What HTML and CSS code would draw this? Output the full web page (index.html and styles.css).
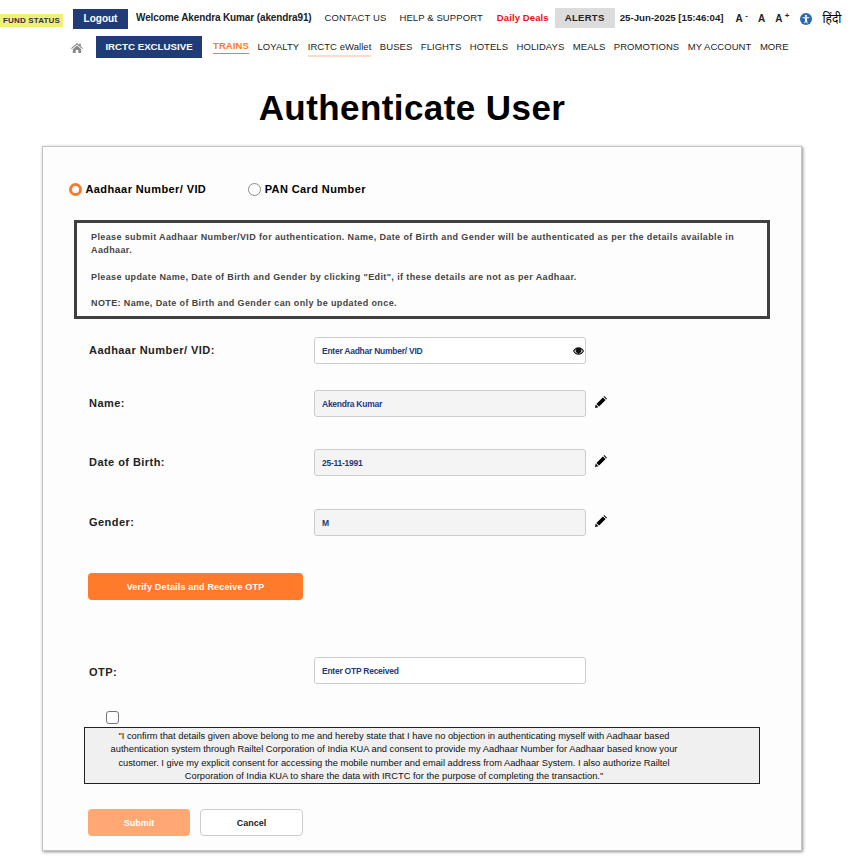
FILE: index.html
```html
<!DOCTYPE html>
<html lang="en">
<head>
  <meta charset="UTF-8" />
  <title>Authenticate User</title>
  <link rel="stylesheet" href="styles.css">
</head>
<body>
  <!-- Top bar -->
  <header class="top-bar">
    <span class="fund-status">FUND STATUS</span>
    <a class="logout-btn">Logout</a>
    <span class="welcome">Welcome Akendra Kumar (akendra91)</span>
    <a class="top-link contact">CONTACT US</a>
    <a class="top-link help">HELP &amp; SUPPORT</a>
    <a class="daily-deals">Daily Deals</a>
    <a class="alerts">ALERTS</a>
    <span class="clock">25-Jun-2025 [15:46:04]</span>
    <span class="font-size">A <sup>-</sup></span>
    <span class="font-size">A</span>
    <span class="font-size">A <sup>+</sup></span>
    <svg class="access-icon" viewBox="0 0 12 12" width="12" height="12">
      <circle cx="6" cy="6" r="6" fill="#2a69ac" />
      <circle cx="6" cy="2.9" r="1.1" fill="#fff" />
      <path d="M2.6 4.2h6.8v.9L7 5.6v2.2l.8 2.4h-1L6 8.2l-.8 2h-1L5 7.8V5.6l-2.4-.5z" fill="#fff" />
    </svg>
    <span class="hindi" lang="hi">हिंदी</span>
  </header>

  <!-- Main nav -->
  <nav class="main-nav">
    <svg class="home-icon" viewBox="0 0 12 10" width="12" height="10">
      <path d="M6 0 0 5.2l.7.8L6 1.5 11.3 6l.7-.8L9.8 3.3V.6H8.300v1.400z M1.800 6.200V10h3V7h2.400v3h3V6.200L6 2.600z" fill="#8a8a8a" />
    </svg>
    <a class="exclusive-btn">IRCTC EXCLUSIVE</a>
    <a class="nav-link trains">TRAINS</a>
    <a class="nav-link">LOYALTY</a>
    <a class="nav-link wallet">IRCTC eWallet</a>
    <a class="nav-link">BUSES</a>
    <a class="nav-link">FLIGHTS</a>
    <a class="nav-link">HOTELS</a>
    <a class="nav-link">HOLIDAYS</a>
    <a class="nav-link">MEALS</a>
    <a class="nav-link">PROMOTIONS</a>
    <a class="nav-link">MY ACCOUNT</a>
    <a class="nav-link">MORE</a>
  </nav>

  <h1 class="page-title">Authenticate User</h1>

  <main class="auth-card">
    <!-- ID type -->
    <div class="id-type">
      <label class="radio-label"><span class="radio checked"></span>Aadhaar Number/ VID</label>
      <label class="radio-label"><span class="radio"></span>PAN Card Number</label>
    </div>

    <div class="notice">
      <p>Please submit Aadhaar Number/VID for authentication. Name, Date of Birth and Gender will be authenticated as per the details available in Aadhaar.</p>
      <p>Please update Name, Date of Birth and Gender by clicking "Edit", if these details are not as per Aadhaar.</p>
      <p>NOTE: Name, Date of Birth and Gender can only be updated once.</p>
    </div>

    <!-- Fields -->
    <div class="field-row aadhaar-row">
      <label class="field-label">Aadhaar Number/ VID:</label>
      <div class="input-wrap">
        <input class="field-input" type="text" placeholder="Enter Aadhar Number/ VID" />
        <svg class="eye-icon" viewBox="0 0 12 8" width="11" height="8">
          <path d="M6 0C3.400 0 1.200 1.600 0 4c1.200 2.400 3.400 4 6 4s4.800-1.600 6-4C10.800 1.600 8.600 0 6 0z" fill="#111" />
          <path d="M1.300 4C2.300 2.600 3.300 1.700 4.300 1.300a3 3 0 1 0 3.400 0C8.700 1.700 9.700 2.600 10.700 4 9.500 5.800 7.800 6.900 6 6.900S2.500 5.800 1.300 4z" fill="#fff" />
          <circle cx="6" cy="3.800" r="2.300" fill="#111" />
        </svg>
      </div>
    </div>

    <div class="field-row name-row">
      <label class="field-label">Name:</label>
      <input class="field-input locked" type="text" value="Akendra Kumar" readonly />
      <svg class="edit-icon" viewBox="0 0 12 12" width="12" height="12">
        <path d="M0 12l.7-3.400 2.700 2.700z M1.400 7.900 7.900 1.400l2.700 2.700-6.500 6.500z M8.600.7 9.300 0 12 2.700l-.7.700z" fill="#000" />
      </svg>
    </div>

    <div class="field-row dob-row">
      <label class="field-label">Date of Birth:</label>
      <input class="field-input locked" type="text" value="25-11-1991" readonly />
      <svg class="edit-icon" viewBox="0 0 12 12" width="12" height="12">
        <path d="M0 12l.7-3.400 2.700 2.700z M1.400 7.900 7.900 1.400l2.700 2.700-6.500 6.500z M8.600.7 9.300 0 12 2.700l-.7.700z" fill="#000" />
      </svg>
    </div>

    <div class="field-row gender-row">
      <label class="field-label">Gender:</label>
      <input class="field-input locked" type="text" value="M" readonly />
      <svg class="edit-icon" viewBox="0 0 12 12" width="12" height="12">
        <path d="M0 12l.7-3.400 2.700 2.700z M1.400 7.900 7.900 1.400l2.700 2.700-6.500 6.500z M8.600.7 9.300 0 12 2.700l-.7.700z" fill="#000" />
      </svg>
    </div>

    <button type="button" class="btn verify-btn">Verify Details and Receive OTP</button>

    <div class="field-row otp-row">
      <label class="field-label">OTP:</label>
      <input class="field-input" type="text" placeholder="Enter OTP Received" />
    </div>

    <!-- Consent -->
    <span class="consent-check"></span>
    <p class="consent-box">"I confirm that details given above belong to me and hereby state that I have no objection in authenticating myself with Aadhaar based authentication system through Railtel Corporation of India KUA and consent to provide my Aadhaar Number for Aadhaar based know your customer. I give my explicit consent for accessing the mobile number and email address from Aadhaar System. I also authorize Railtel Corporation of India KUA to share the data with IRCTC for the purpose of completing the transaction."</p>

    <div class="actions">
      <button type="button" class="btn submit-btn">Submit</button>
      <button type="button" class="btn cancel-btn">Cancel</button>
    </div>
  </main>
</body>
</html>
```

FILE: styles.css
```css
* {
  box-sizing: border-box;
  margin: 0;
  padding: 0;
}

body {
  font-family: 'Liberation Sans', Arial, sans-serif;
  background: #fff;
  color: #000;
  height: 864px;
  overflow: hidden;
}

/* Top bar */
.top-bar {
  display: flex;
  align-items: center;
  height: 20px;
  margin-top: 8px;
  font-size: 9.5px;
  white-space: nowrap;
}

.fund-status {
  width: 63px;
  height: 13px;
  margin-top: 4px;
  line-height: 13px;
  background: #eef07a;
  font-size: 8px;
  font-weight: 700;
  letter-spacing: 0.15px;
  text-align: center;
  color: #333;
}

.logout-btn {
  width: 55px;
  height: 20px;
  margin: 2px 0 0 10px;
  line-height: 20px;
  background: #1f3c78;
  color: #fff;
  font-size: 10px;
  font-weight: 700;
  text-align: center;
}

.welcome {
  margin: 0 0 1px 8px;
  font-size: 10px;
  font-weight: 700;
  letter-spacing: -0.12px;
  color: #222;
}

.top-link {
  margin-bottom: 1px;
  color: #222;
  letter-spacing: 0.1px;
}

.contact {
  margin-left: 13px;
}

.help {
  margin-left: 13px;
}

.daily-deals {
  margin: 0 0 1px 14px;
  color: #f01010;
  font-weight: 700;
  letter-spacing: 0.1px;
}

.alerts {
  width: 60px;
  height: 20px;
  margin-left: 6px;
  line-height: 20px;
  background: #dcdcdc;
  font-weight: 700;
  letter-spacing: 0.3px;
  text-align: center;
  color: #222;
}

.clock {
  margin: 0 0 1px 5px;
  font-size: 9.7px;
  font-weight: 700;
  color: #222;
}

.font-size {
  margin-left: 10px;
  font-size: 10px;
  font-weight: 700;
  color: #222;
}

.clock + .font-size {
  margin-left: 12px;
}

.font-size sup {
  font-size: 8px;
  line-height: 0;
}

.access-icon {
  margin-left: 11px;
  margin-top: 2px;
}

.hindi {
  margin-left: 10px;
  font-family: 'Noto Sans', 'Liberation Sans', sans-serif;
  font-size: 12px;
}

/* Main nav */
.main-nav {
  display: flex;
  align-items: center;
  height: 22px;
  margin-top: 8px;
  padding-left: 71px;
  white-space: nowrap;
}

.home-icon {
  margin-top: 2px;
}

.exclusive-btn {
  width: 106px;
  height: 22px;
  margin-left: 13px;
  line-height: 22px;
  background: #1f3c78;
  color: #fff;
  font-size: 9.7px;
  font-weight: 700;
  text-align: center;
}

.nav-link {
  margin-left: 8.5px;
  margin-bottom: 2px;
  font-size: 9.5px;
  color: #222;
  letter-spacing: 0.05px;
}

.trains {
  margin-left: 11px;
  color: #ff7a2b;
  font-weight: 700;
  border-bottom: 1px solid #ff7a2b;
  letter-spacing: 0.1px;
  line-height: 14px;
}

.wallet {
  border-bottom: 2px solid #fcdcc8;
  line-height: 16px;
  padding-top: 1px;
  margin-top: 2px;
}

.page-title {
  margin-top: 30px;
  padding-right: 41px;
  text-align: center;
  font-size: 35px;
  line-height: 40px;
  font-weight: 700;
  letter-spacing: 0.42px;
}

/* Card */
.auth-card {
  width: 760px;
  height: 705px;
  margin: 18px 0 0 42px;
  background: #fdfdfd;
  border: 1px solid #c4c4c4;
  box-shadow: 1px 1px 3px rgba(0, 0, 0, 0.45);
}

.id-type {
  display: flex;
  gap: 42px;
  margin: 35px 0 0 26px;
}

.radio-label {
  display: flex;
  align-items: center;
  gap: 3.5px;
  font-size: 11px;
  font-weight: 700;
  letter-spacing: 0.4px;
  line-height: 14px;
}

.radio {
  width: 13px;
  height: 13px;
  border: 1px solid #8a8a8a;
  border-radius: 50%;
  background: #fff;
}

.radio.checked {
  border: 3px solid #ff7a2b;
}

.notice {
  width: 696px;
  height: 99px;
  margin: 24px 0 0 31px;
  padding: 8px 13px 0 14px;
  border: 3px solid #3f3f3f;
  font-size: 9px;
  font-weight: 700;
  line-height: 13px;
  letter-spacing: 0.385px;
  color: #444;
}

.notice p {
  margin-bottom: 13.5px;
}

/* Form rows */
.field-row {
  display: flex;
  align-items: center;
  padding-left: 46px;
}

.field-label {
  width: 225px;
  margin-top: -2px;
  font-size: 11px;
  font-weight: 700;
  letter-spacing: 0.45px;
  color: #222;
}

.otp-row .field-label {
  margin-top: 2px;
}

.input-wrap {
  position: relative;
}

.field-input {
  display: block;
  width: 272px;
  height: 27px;
  padding: 0 7px;
  border: 1px solid #ccc;
  border-radius: 3px;
  background: #fff;
  font-family: 'Liberation Sans', Arial, sans-serif;
  font-size: 8.5px;
  font-weight: 700;
  letter-spacing: -0.25px;
  color: #1f3c78;
  outline: none;
}

.field-input::placeholder {
  color: #1f3c78;
  opacity: 1;
}

.field-input.locked {
  background: #f4f4f4;
}

.eye-icon {
  position: absolute;
  right: 2px;
  top: 10px;
}

.edit-icon {
  margin-left: 9px;
  margin-top: -4px;
}

.aadhaar-row {
  margin-top: 18px;
}

.name-row {
  margin-top: 26px;
}

.dob-row {
  margin-top: 32px;
}

.gender-row {
  margin-top: 33px;
}

.btn {
  display: block;
  border-radius: 4px;
  font-family: 'Liberation Sans', Arial, sans-serif;
  font-size: 9px;
  font-weight: 700;
}

.verify-btn {
  width: 215px;
  height: 27px;
  margin: 37px 0 0 45px;
  background: #ff7a2b;
  border: none;
  color: #fff;
  letter-spacing: 0.17px;
}

.otp-row {
  margin-top: 57px;
}

.consent-check {
  display: block;
  width: 13px;
  height: 13px;
  margin: 27px 0 0 63px;
  border: 1px solid #767676;
  border-radius: 3px;
  background: #fff;
}

.consent-box {
  width: 676px;
  height: 57px;
  margin: 3px 0 0 41px;
  padding: 2px 66px 0 10px;
  background: #f0f0f0;
  border: 1px solid #222;
  font-size: 9.32px;
  line-height: 13.3px;
  text-align: center;
  color: #111;
}

.actions {
  display: flex;
  gap: 10px;
  margin: 25px 0 0 45px;
}

.submit-btn {
  width: 102px;
  height: 27px;
  background: #ffa873;
  border: none;
  color: #fff;
}

.cancel-btn {
  width: 103px;
  height: 27px;
  background: #fff;
  border: 1px solid #ccc;
  color: #222;
}
```
